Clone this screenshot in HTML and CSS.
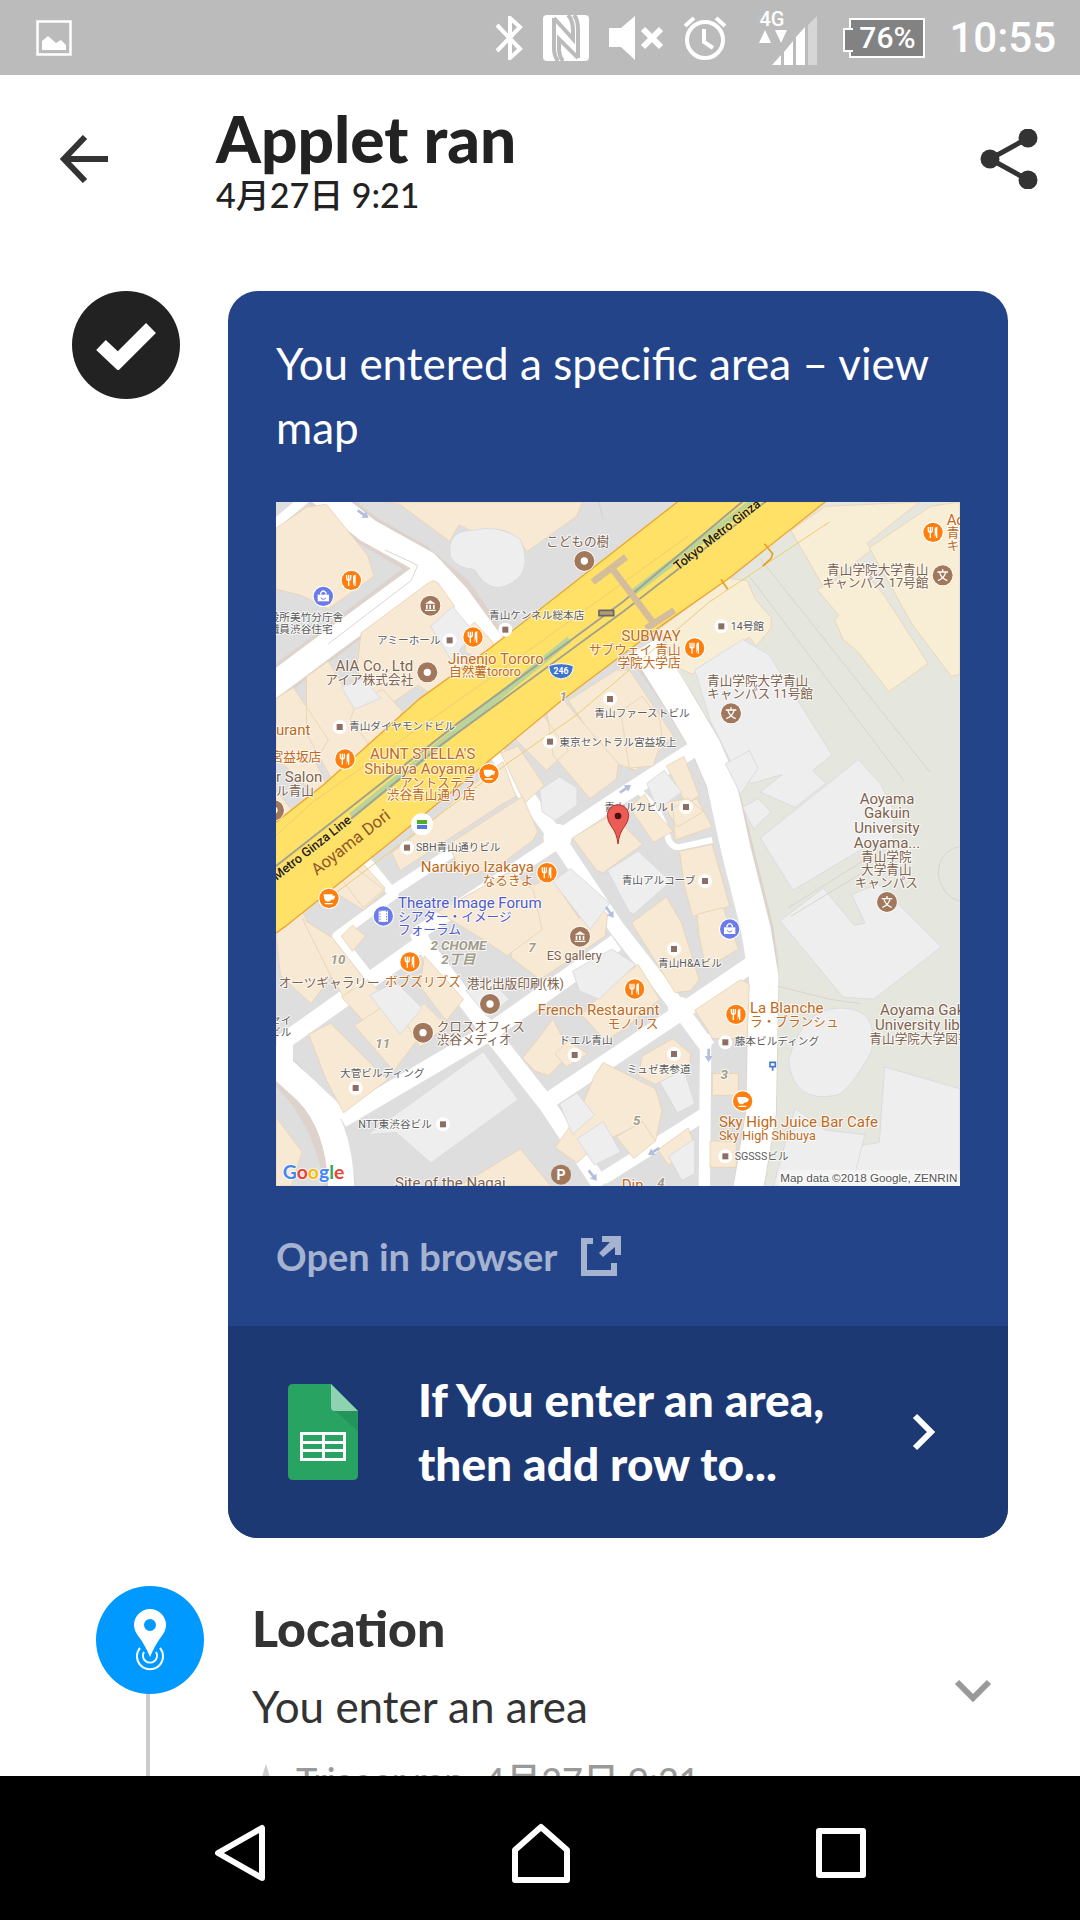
FILE: index.html
```html
<!DOCTYPE html>
<html lang="en">

<head>
  <meta charset="UTF-8">
  <meta name="viewport" content="width=device-width, initial-scale=1.0">
  <title>Applet ran</title>
  <link rel="stylesheet" href="styles.css">
</head>

<body>
  <div class="status">
    <svg class="picture" width="36" height="36" viewBox="0 0 36 36"><path d="M1.500 1.500h33v33h-33z" fill="none" stroke="#fff" stroke-width="2.500" /><path d="M6 30V21l6-5 8 7 5-3 5 5v5z" fill="#fff" /></svg>
    <div class="status-icons">
      <svg width="28" height="44" viewBox="0 0 28 44"><path d="M2 9l23 24-10 9V2l10 9L2 35" fill="none" stroke="#fff" stroke-width="4" /></svg>
      <svg width="46" height="46" viewBox="0 0 46 46"><rect width="46" height="46" rx="4" fill="#fff" /><path d="M11 3v30q0 8 4 13M11 3l19 21v-8Q30 5 25 0M35 43L16 24v9q0 8 4 13M35 43V14q0-9-4-14" fill="none" stroke="#bbb" stroke-width="4" /></svg>
      <svg width="54" height="44" viewBox="0 0 54 44"><path d="M0 12h12L26 0v44L12 31H0z" fill="#fff" /><path d="M34 13l18 18M52 13L34 31" stroke="#fff" stroke-width="6" /></svg>
      <svg width="44" height="44" viewBox="0 0 44 44"><g fill="none" stroke="#fff" stroke-width="4"><circle cx="22" cy="24" r="18" /><path d="M2 10L11 2M42 10L33 2M21 13v13l9 6" /></g></svg>
      <div class="mobile">
        <span>4G</span>
        <svg width="58" height="47" viewBox="0 0 58 47"><path d="M0 25l6-13 6 13zM16 12h12l-6 13zM13 47l9-10v10zM25 34l9-11v24h-9zM37 19l9-10v38h-9z" fill="#fff" /><path d="M49 7l9-9v49h-9z" fill="#d6d6d6" /></svg>
      </div>
      <div class="battery">76%</div>
      <time>10:55</time>
    </div>
  </div>

  <header class="header">
    <button class="icon-button" aria-label="Back"><svg width="48" height="48" viewBox="0 0 48 48"><path d="M25 2L4 24l21 22M4 24h44" fill="none" stroke="#333" stroke-width="6" /></svg></button>
    <div class="heading">
      <h1>Applet ran</h1>
      <p>4月27日 9:21</p>
    </div>
    <button class="icon-button" aria-label="Share"><svg width="58" height="60" viewBox="0 0 58 60"><path d="M48 9L10 30l38 21" fill="none" stroke="#333" stroke-width="5" /><g fill="#333"><circle cx="48" cy="9" r="9.500" /><circle cx="10" cy="30" r="9.500" /><circle cx="48" cy="51" r="9.500" /></g></svg></button>
  </header>

  <main>
    <section class="run">
      <div class="circle done"><svg width="62" height="50" viewBox="0 0 62 50"><path d="M6 25l17 16L56 8" fill="none" stroke="#fff" stroke-width="14" /></svg></div>
      <article class="card">
        <div class="card-body">
          <p class="message">You entered a specific area – view map</p>

          <svg class="map" viewBox="0 0 2052 2052" role="img" aria-label="Map of the area">
            <defs>
              <g id="food"><circle r="32" fill="#fff" /><circle r="29" fill="#ff7f0e" /><path d="M-14-16v10q0 6 6 6v17M-8-16V0M-2-16v10q0 6-6 6" fill="none" stroke="#fff" stroke-width="4" /><path d="M5 17v-26q0-8 8-8v34h-4v-13z" fill="#fff" /></g>
              <g id="cup"><circle r="32" fill="#fff" /><circle r="29" fill="#ff7f0e" /><path d="M-16-12h27v4h7q0 14-11 12-4 6-11 6-12 0-12-22zM-13 14h24v4h-24z" fill="#fff" /></g>
              <g id="ring"><circle r="32" fill="#fff" /><circle r="30" fill="#a1785c" /><circle r="11" fill="#fff" /></g>
              <g id="spot"><circle r="21" fill="#fff" /><path d="M-9-9H9V9H-9z" fill="#8d6e63" /></g>
              <g id="museum"><circle r="32" fill="#fff" /><circle r="30" fill="#a1785c" /><path d="M-16-6L0-16 16-6zM-16 12h32v4h-32zM-13-3h5v13h-5zM-3-3h5v13h-5zM8-3h5v13H8z" fill="#fff" /></g>
              <g id="shop"><circle r="32" fill="#fff" /><circle r="29" fill="#6b7be8" /><path d="M-17-5h34v20h-34z" fill="#fff" /><path d="M-8-5v-5q8-12 16 0v5" fill="none" stroke="#fff" stroke-width="4" /><path d="M-8 4q8 10 16 0" fill="none" stroke="#6b7be8" stroke-width="3" /></g>
              <g id="school"><circle r="32" fill="#fff" /><circle r="30" fill="#a1785c" /><path d="M0-18v7M-16-10h32M-9-8q5 17 23 24M9-8Q4 9-14 16" fill="none" stroke="#fff" stroke-width="4" /></g>
              <path id="arrow" d="M0-4h22v-8l18 12-18 12V4H0z" fill="#b3bfdc" />
            </defs>

            <g transform="scale(1.3087)">
              <!-- ground -->
              <path class="ground" d="M0 0h1568v1568H0z" />
              <path class="campus" d="M1180 60L1260 0h308v1568h-460l30-200 15-330-40-150-60-250-50-120-130-190z" />

              <!-- side streets -->
              <path class="street-edge" d="M90-30L210 65 330 135 415 205 500 330M340 160L120 325-20 430M850 350L920 450 985 560 1020 640 1060 800 1105 980 1118 1100 1112 1400 1080 1590M-10 1280Q130 1400 150 1590" />
              <g class="street">
                <path d="M90-30L210 65 345 140 415 215 510 345M345 160L120 325-20 430" stroke-width="56" />
                <path d="M-20 65L70-10" stroke-width="22" />
                <path d="M845 330L920 450 985 560 1020 640 1055 800 1100 980 1118 1090 1112 1400 1080 1590" stroke-width="68" />
                <path d="M495 560L600 710 640 765 780 975 920 1155 990 1250" stroke-width="36" />
                <path d="M985 1220L982 1568" stroke-width="26" />
                <path d="M925 1165L960 1200 990 1245" stroke-width="24" />
                <path d="M640 775L790 675 960 565" stroke-width="36" />
                <path d="M825 655L870 700Q890 730 900 775 910 795 930 790L1000 775" stroke-width="14" />
                <path d="M575 690L270 890" stroke-width="24" />
                <path d="M205 820L270 900 140 995 215 1090" stroke-width="22" />
                <path d="M650 775L440 915 330 985 330 1030" stroke-width="32" />
                <path d="M325 985L335 1010 490 1215 620 1380 745 1568" stroke-width="38" />
                <path d="M330 1015L20 1235 20 1290 150 1410" stroke-width="38" />
                <path d="M-30 1260L70 1350Q150 1430 150 1590" stroke-width="60" />
                <path d="M150 1415L490 1215 780 1010" stroke-width="40" />
                <path d="M620 1375L920 1175 1090 1060" stroke-width="38" />
                <path d="M750 1550L980 1405" stroke-width="30" />
                <path d="M15 590L90 650" stroke-width="16" />
                <circle cx="645" cy="770" r="22" stroke-width="20" />
                <circle cx="925" cy="1160" r="14" stroke-width="24" />
              </g>

              <!-- buildings -->
              <g class="house">
                <path d="M0 60L70 12 115 5 210 122 225 170 120 245 60 215 0 200z" />
                <path d="M250 0h452l-12 32-115 82q-30-60-95-50-25 12-60-12l-22 38-115-85z" />
                <path d="M195 300L350 185q15-10 25 5l35 50-55 45 100 115-70 60-60-40-80 55-60-90z" />
                <path d="M430 300l25-25 45 50-20 40-45-20z" />
                <path d="M70 400l50-35 65 110 40 50-35 70-60 45-60-110zM0 450l40-25 80 120-30 50 40 80-20 15-110-105z" />
                <path d="M185 455l60-25 45 50-30 50-35 40-55-70zM0 660l40 50-40 30z" />
                <path d="M670 455l110-70h30l100 150-25 30-60 50-60-20z" />
                <path d="M620 475l40-20 125 145-5 35-60 45-85-100zM545 540l65-55 60 85-50 45zM515 575l40-15 60 90-45 40z" />
                <path d="M790 480l50-35 40 55 5 40-20 65-55 5z" />
                <path d="M430 665l90-70 30 80-35 20-230 150-20-40 100-80z" />
                <path d="M395 785l170-110 35 80-10 20-80 60-80 25z" />
                <path d="M680 770l90-55 70 70-90 65-15-5zM810 700l35-30 20 35 45 50-45 25z" />
                <path d="M895 605l40-22 35 90-30 20zM910 700l55-20 35 65-85 30zM885 690l60-10 35 30-60 35z" />
                <path d="M925 800l75-15 40 140-20 10-65 15-20-75z" />
                <path d="M815 965l80-60 35 60 40 130-20 25-35 5z" />
                <path d="M965 945l60-15 35 95-75 45-15-75z" />
                <path d="M960 1165l105-70 20 10-5 125h-80l-10-20z" />
                <path d="M1000 1310h60v50h-60zM995 1465h60v60h-60z" />
                <path d="M110 880l60-50 80 60-50 45zM150 865l50-35 50 55-50 45zM0 990l60-50 80 130-60 80-70-65z" />
                <path d="M60 955l70 45 70 90-45 45-30-50zM150 995l25-25 30 25-30 35z" />
                <path d="M540 900l90-40 65 95 30-35 35 25-5 50-90 60-60 40-65-50-5-50z" />
                <path d="M370 940l170-95 50 45 20 90-80 60-60-40z" />
                <path d="M340 1040l90 100-40 50-60-80zM150 1135l60-40 120 120-50 60z" />
                <path d="M75 1220l50-25 130 130-100 75-40-75zM180 1200l90-60 60 85-60 80z" />
                <path d="M290 1180l50-30 50 50-60 50zM565 1275l40-50 30-40 20 40 30 30-60 60-30-10z" />
                <path d="M640 1265l30-30 45 30-50 30zM700 1175l60-60 70-55 50 80-85 70-40 25z" />
                <path d="M730 1315l20-30 120 60 15 50-15 70-40-35-90 40-50 45-50-35 55-80z" />
                <path d="M840 1270l70-40 40 35v30l-80 40-40-20zM780 1455l60-35 30 45-50 40zM875 1485l70-50 15 40-60 45z" />
                <path d="M0 1410l60 80-25 78H0zM420 1568l140-85 70 85z" />
                <path class="school-house" d="M880 290L1035 175l45 5 20 45 35 40v25l-35 40-15-20-130 85-35-15z" />
                <path class="school-house" d="M1180 65L1260 10l215-10-120 95 10 15-110 85z" />
                <path class="school-house" d="M1240 200l100-50 55 65 100 155-90 65-70-90-35-30-20-45 10-10z" />
                <path class="school-house" d="M1360 105L1500 10l68-10v395l-20 5-90-120z" />
              </g>
              <g class="block">
                <path d="M400 125q-10-60 50-60 60-15 110 20 25 60-5 90-60 50-100-20-45-5-55-30z" />
                <path d="M355 285l50-45 50 60-35 40 20 30-40-10zM150 425l50-20 40 45-60 25z" />
                <path d="M605 660l45-30 40 25v40l-50 35-30-20zM850 645l40-30 40 50-55 40zM760 845l70-45 75 70-85 75-10-5z" />
                <path d="M960 385l110-70 60 35 145 230-45 35 30 30-70 55-80-35 50-40-70 20-45-45-50-100z" />
                <path d="M1030 600l55-30 20 40-40 60zM1070 700l35-20 30 30-40 40z" />
                <path d="M1110 770L1335 590l50 55 30 60v85l-45-10-185 110z" />
                <path d="M1155 960l100-75 70 85 25-5-30-65 60-25 145 145-155 120-70-5z" />
                <path d="M1175 1280q30-120 120-120 90 0 70 100-50 90-80 100-100 20-110-80z" />
                <path d="M1395 1295l173 50v223h-280l35-90 60-10z" />
                <path d="M1190 1390l70 50 90 10-30 118h-180z" />
                <path d="M635 870l40-30 90 80-45 60zM680 1075l90-50 55 35-85 80-45-20zM435 1120l60-20 40 40-50 40z" />
                <path d="M215 1130l60-30 60 60-50 60zM210 1450L475 1260l80 110-200 145-80-70z" />
                <path d="M650 1380l40-25 40 50-50 45zM880 1330l55-30 25 80-40 20zM690 1460l60-40 40 70-60 30zM900 1500l60-40v80l-30 15z" />
              </g>
              <g class="paths">
                <path d="M1085 100Q1120 60 1130 95M1110 130L1500 620M1085 170L1440 640M1175 930L1350 820M1180 950L1360 840M1150 1110L1270 1140 1340 1150" />
                <path d="M1568 790q-50 10-50 65 10 50 50 60M740 0l10 40M230 40L350 105M120 325L310 180 325 145 250 110" />
              </g>
            </g>

            <!-- highway and metro line -->
            <path class="highway" d="M-10 968L142 849 432 589 642 439 1032 134 1217-10H1660L1352 234 1157 370 852 599 672 749 352 1014 27 1274-10 1300z" />
            <path class="lane" d="M-10 1010L110 900 640 530 1240 100M130 1210L700 780 900 640 1300 300 1660 60" />
            <path class="green" d="M225 942L880 412M1070 272L1430 0" />
            <path class="rail" d="M-10 1100L540 668 1040 300 1410-10M225 950L500 725 1040 330 1480-10" />
            <path class="bridge" d="M950 240l100-75M1005 195l125 165M1110 380l85-55" />
            <path class="bridge-edge" d="M1465 125l25 30-5 15-25 22M1335 232l20 30" />

            <use href="#arrow" transform="translate(245 25) rotate(35)" />
            <use href="#arrow" transform="translate(1032 872) rotate(-35)" />
            <use href="#arrow" transform="translate(990 1215) rotate(55)" />
            <use href="#arrow" transform="translate(1298 1640) rotate(90)" />
            <use href="#arrow" transform="translate(1150 1938) rotate(148)" />
            <use href="#arrow" transform="translate(938 2005) rotate(52)" />

            <g transform="translate(-18 -21)">
              <use href="#ring" x="943" y="198" />
              <use href="#food" x="244" y="256" />
              <use href="#shop" x="160" y="304" />
              <use href="#museum" x="481" y="332" />
              <use href="#spot" x="706" y="404" />
              <use href="#spot" x="539" y="436" />
              <use href="#food" x="609" y="426" />
              <use href="#ring" x="472" y="532" />
              <use href="#spot" x="209" y="696" />
              <use href="#spot" x="1020" y="612" />
              <use href="#spot" x="840" y="740" />
              <use href="#food" x="225" y="792" />
              <use href="#cup" x="657" y="836" />
              <use href="#ring" x="12" y="946" />
              <circle cx="456" cy="988" r="33" fill="#fff" /><path d="M441 975h30v12h-30z" fill="#4caf28" /><path d="M441 990h30v12h-30z" fill="#5577dd" />
              <path d="M836 512q37-12 74 0 0 36-37 40-36-4-37-40z" fill="#3f74cf" stroke="#fff" stroke-width="3" />
              <path d="M987 346h44v16h-44z" fill="#b39b72" stroke="#666" stroke-width="5" stroke-linejoin="round" />
              <g class="brown"><text class="l" x="828" y="153">こどもの樹</text><text class="xl end" x="430" y="528">AIA Co., Ltd</text><text class="l end" x="430" y="567">アイア株式会社</text><text class="xl" x="18" y="861">r Salon</text><text class="l" x="18" y="899">ル青山</text></g>
              <g class="grey"><text class="m" x="-4" y="379">役所美竹分庁舎</text><text class="m" x="-4" y="415">職員渋谷住宅</text><text class="m" x="657" y="373">青山ケンネル総本店</text><text class="m end" x="512" y="446">アミーホール</text><text class="m" x="237" y="706">青山ダイヤモンドビル</text><text class="m" x="868" y="752">東京セントラル宮益坂上</text><text class="m" x="973" y="667">青山ファーストビル</text></g>
              <g class="orange"><text class="xl" x="534" y="506">Jinenjo Tororo</text><text class="l" x="537" y="544">自然薯tororo</text><text class="xl" x="18" y="720">urant</text><text class="l" x="2" y="798">宮益坂店</text><text class="xl end" x="616" y="792">AUNT STELLA'S</text><text class="xl end" x="616" y="837">Shibuya Aoyama</text><text class="l end" x="616" y="875">アントステラ</text><text class="l end" x="616" y="913">渋谷青山通り店</text></g>
              <text class="route" x="873" y="537">246</text>
              <text class="area" x="880" y="617">1</text>
            </g>

            <g transform="translate(1002 -21)">
              <use href="#food" x="969" y="112" />
              <use href="#school" x="998" y="241" />
              <use href="#spot" x="334" y="394" />
              <use href="#food" x="254" y="459" />
              <use href="#school" x="363" y="655" />
              <use href="#spot" x="228" y="936" />
              <g class="orange"><text class="xl" x="1010" y="90">Aoyama</text><text class="l" x="1010" y="126">青山</text><text class="l" x="1010" y="164">キャ</text><text class="xl end" x="212" y="438">SUBWAY</text><text class="l end" x="212" y="476">サブウェイ 青山</text><text class="l end" x="212" y="515">学院大学店</text></g>
              <g class="brown"><text class="l end" x="955" y="236">青山学院大学青山</text><text class="l end" x="955" y="275">キャンパス 17号館</text><text class="l" x="291" y="570">青山学院大学青山</text><text class="l" x="291" y="608">キャンパス 11号館</text>
                <text class="xl mid" x="831" y="926">Aoyama</text><text class="xl mid" x="831" y="970">Gakuin</text><text class="xl mid" x="831" y="1015">University</text><text class="xl mid" x="831" y="1060">Aoyama...</text><text class="l mid" x="829" y="1099">青山学院</text><text class="l mid" x="829" y="1138">大学青山</text><text class="l mid" x="829" y="1176">キャンパス</text></g>
              <g class="grey"><text class="m" x="362" y="405">14号館</text><text class="m end" x="190" y="947">青山ルカビル I</text></g>
            </g>

            <g transform="translate(-18 1014)">
              <use href="#spot" x="411" y="23" />
              <use href="#food" x="831" y="98" />
              <use href="#cup" x="177" y="175" />
              <circle cx="340" cy="228" r="32" fill="#fff" /><circle cx="340" cy="228" r="29" fill="#6b7be8" /><path d="M326 212h28v34h-28z" fill="#fff" /><path d="M330 212v34M350 212v34" stroke="#6b7be8" stroke-width="3" stroke-dasharray="4 4" />
              <use href="#museum" x="930" y="290" />
              <use href="#food" x="420" y="366" />
              <use href="#ring" x="660" y="492" />
              <use href="#ring" x="459" y="578" />
              <use href="#spot" x="914" y="645" />
              <use href="#spot" x="257" y="744" />
              <use href="#spot" x="519" y="853" />
              <circle cx="873" cy="1004" r="30" fill="#a1785c" />
              <text class="parking" x="873" y="1019">P</text>
              <g class="grey"><text class="m" x="438" y="32">SBH青山通りビル</text><text class="m" x="0" y="553">セイ</text><text class="m" x="0" y="587">ビル</text><text class="m" x="868" y="613">ドエル青山</text><text class="m" x="210" y="712">大菅ビルディング</text><text class="m" x="265" y="864">NTT東渋谷ビル</text></g>
              <g class="orange"><text class="xl end" x="792" y="96">Narukiyo Izakaya</text><text class="l end" x="790" y="134">なるきよ</text><text class="l" x="345" y="438">ボブズリブズ</text><text class="xl end" x="1168" y="525">French Restaurant</text><text class="l end" x="1165" y="563">モノリス</text></g>
              <g class="blue"><text class="xl" x="384" y="205">Theatre Image Forum</text><text class="l" x="384" y="243">シアター・イメージ</text><text class="l" x="384" y="281">フォーラム</text></g>
              <g class="brown"><text class="l" x="830" y="361">ES gallery</text><text class="l" x="26" y="441">オーツギャラリー</text><text class="l" x="590" y="445">港北出版印刷(株)</text><text class="l" x="500" y="573">クロスオフィス</text><text class="l" x="500" y="612">渋谷メディオ</text><text class="xl" x="375" y="1044">Site of the Nagai</text></g>
              <text class="area" x="565" y="331">2 CHOME</text>
              <text class="area" x="565" y="371">2丁目</text>
              <text class="area" x="204" y="373">10</text>
              <text class="area" x="786" y="337">7</text>
              <text class="area" x="338" y="625">11</text>
              <text class="google" x="38" y="1018"><tspan fill="#4285f4">G</tspan><tspan fill="#ea4335">o</tspan><tspan fill="#fbbc05">o</tspan><tspan fill="#4285f4">g</tspan><tspan fill="#34a853">l</tspan><tspan fill="#ea4335">e</tspan></text>
              <text class="line-name" transform="translate(20 122) rotate(-38)">Metro Ginza Line</text>
              <text class="road-name" transform="translate(140 108) rotate(-38)">Aoyama Dori</text>
            </g>

            <g transform="translate(1002 1014)">
              <use href="#spot" x="285" y="123" />
              <use href="#school" x="831" y="186" />
              <use href="#shop" x="359" y="267" />
              <use href="#spot" x="192" y="327" />
              <use href="#food" x="74" y="447" />
              <use href="#food" x="378" y="523" />
              <use href="#spot" x="346" y="607" />
              <use href="#spot" x="192" y="642" />
              <use href="#cup" x="398" y="783" />
              <use href="#spot" x="346" y="949" />
              <path d="M480 667h16v13h-16zM488 680v12" fill="#fff" stroke="#4078d0" stroke-width="5" />
              <g class="grey"><text class="m" x="35" y="132">青山アルコーブ</text><text class="m" x="144" y="382">青山H&amp;Aビル</text><text class="m" x="374" y="616">藤本ビルディング</text><text class="m" x="50" y="699">ミュゼ表参道</text><text class="m" x="374" y="959">SGSSSビル</text></g>
              <g class="orange"><text class="xl" x="420" y="519">La Blanche</text><text class="l" x="420" y="558">ラ・ブランシュ</text><text class="xl" x="327" y="862">Sky High Juice Bar Cafe</text><text class="l" x="327" y="900">Sky High Shibuya</text><text class="xl" x="35" y="1050">Din</text></g>
              <g class="brown"><text class="xl" x="810" y="526">Aoyama Gakuin</text><text class="xl" x="795" y="570">University library</text><text class="l" x="778" y="610">青山学院大学図書館</text></g>
              <text class="area" x="343" y="716">3</text>
              <text class="area" x="80" y="854">5</text>
              <text class="area" x="153" y="1040">4</text>
              <path d="M505 990h550v50H505z" fill="#f5f5f5" fill-opacity=".8" />
              <text class="copyright" x="1042" y="1025">Map data ©2018 Google, ZENRIN</text>
            </g>
            <text class="line-name" transform="translate(1206 206) rotate(-38)">Tokyo Metro Ginza Line</text>

            <path d="M1026 1026q-3-32-20-53-12-16-12-33a32 32 0 0 1 64 0q0 17-12 33-17 21-20 53z" fill="#ea5c54" stroke="#b3322c" stroke-width="3" />
            <circle cx="1026" cy="942" r="10" fill="#4b0f0c" />
          </svg>

          <a class="open" href="#">Open in browser
            <svg width="40" height="40" viewBox="0 0 40 40"><path d="M12 5H3v32h30V27" fill="none" stroke="currentColor" stroke-width="6" /><path d="M21 0h19v19h-6V11l-12 10-4-4L29 6h-8z" fill="currentColor" /></svg>
          </a>
        </div>
        <a class="applet" href="#">
          <svg width="70" height="96" viewBox="0 0 70 96"><path d="M5 0h38l27 27v64q0 5-5 5H5q-5 0-5-5V5q0-5 5-5z" fill="#29a362" /><path d="M45 25l25 22V27z" fill="#23945a" /><path d="M43 0l27 27H47q-4 0-4-4z" fill="#8fd2b1" /><path d="M12 48h46v29H12zM15 51v6h19v-6zM37 51v6h18v-6zM15 60v5h19v-5zM37 60v5h18v-5zM15 68v6h19v-6zM37 68v6h18v-6z" fill="#fff" fill-rule="evenodd" /></svg>
          <span>If You enter an area, then add row to...</span>
          <svg width="24" height="38" viewBox="0 0 24 38"><path d="M3 3l16 16L3 35" fill="none" stroke="#fff" stroke-width="6" /></svg>
        </a>
      </article>
    </section>

    <section class="step">
      <div class="rail-column">
        <div class="circle place"><svg width="32" height="62" viewBox="0 0 32 62"><path d="M16 48Q11 36 5 28 0 22 0 16a16 16 0 0 1 32 0q0 6-5 12-6 8-11 20zM16 10a6 6 0 1 0 0 12 6 6 0 0 0 0-12z" fill="#fff" fill-rule="evenodd" /><path d="M6 39a13 13 0 1 0 20 0M10 43a7 7 0 1 0 12 0" fill="none" stroke="#fff" stroke-width="2" /></svg></div>
      </div>
      <div class="step-text">
        <h2>Location</h2>
        <p>You enter an area</p>
        <p class="trigger"><svg width="20" height="32" viewBox="0 0 20 32"><path d="M10 0l10 32H0z" fill="#ccc" /></svg>Trigger ran <time>4月27日 9:21</time></p>
      </div>
      <button class="icon-button expand" aria-label="Show details"><svg width="38" height="24" viewBox="0 0 38 24"><path d="M3 3l16 16L35 3" fill="none" stroke="#999" stroke-width="6" /></svg></button>
    </section>
  </main>

  <nav class="nav">
    <button class="icon-button" aria-label="Back"><svg width="52" height="58" viewBox="0 0 52 58"><path d="M48 4v50L4 29z" fill="none" stroke="#fff" stroke-width="6" stroke-linejoin="round" /></svg></button>
    <button class="icon-button" aria-label="Home"><svg width="58" height="60" viewBox="0 0 58 60"><path d="M3 27L29 4l26 23v30H3z" fill="none" stroke="#fff" stroke-width="6" stroke-linejoin="round" /></svg></button>
    <button class="icon-button" aria-label="Recent apps"><svg width="50" height="50" viewBox="0 0 50 50"><path d="M3 3h44v44H3z" fill="none" stroke="#fff" stroke-width="6" stroke-linejoin="round" /></svg></button>
  </nav>
</body>

</html>
```
FILE: styles.css
```css
* {
  margin: 0;
  padding: 0;
  box-sizing: border-box;
}

body {
  height: 100vh;
  display: flex;
  flex-direction: column;
  overflow: hidden;
  background: #fff;
  color: #333;
  font-family: Lato, "Noto Sans CJK JP", sans-serif;
  font-size: 44px;
  line-height: 64px;
}

svg {
  display: block;
  flex-shrink: 0;
}

a {
  color: inherit;
  text-decoration: none;
}

.icon-button {
  display: flex;
  justify-content: center;
  align-items: center;
  border: none;
  background: none;
}

/* status bar */
.status {
  height: 75px;
  flex-shrink: 0;
  display: flex;
  justify-content: space-between;
  align-items: center;
  padding: 0 24px 0 36px;
  background: #bbb;
  color: #fff;
  font-family: Roboto, sans-serif;
}

.status-icons {
  display: flex;
  align-items: center;
  gap: 20px;
}

.status-icons time {
  margin-left: 4px;
  font-size: 42px;
  font-weight: 500;
}

.mobile {
  display: flex;
  flex-direction: column;
  margin-left: 12px;
  font-size: 20px;
  font-weight: 500;
  line-height: 16px;
}

.mobile svg {
  margin-top: -9px;
  overflow: visible;
}

.battery {
  position: relative;
  width: 76px;
  height: 40px;
  margin-left: 12px;
  border: 2px solid #fff;
  background: #828282;
  font-size: 30px;
  font-weight: 500;
  line-height: 36px;
  text-align: center;
}

.battery::before {
  content: "";
  position: absolute;
  left: -8px;
  top: 8px;
  width: 8px;
  height: 20px;
  border: 2px solid #fff;
  border-right: none;
  background: #828282;
}

/* title */
.header {
  flex-shrink: 0;
  display: flex;
  align-items: center;
  padding: 28px 42px 32px 60px;
}

.heading {
  flex: 1;
  margin-left: 108px;
  color: #222;
}

.heading h1 {
  font-size: 64px;
  font-weight: 900;
  line-height: 72px;
}

.heading p {
  font-size: 34px;
  font-weight: 500;
  line-height: 40px;
}

main {
  flex: 1;
  min-height: 0;
  overflow: hidden;
  padding: 44px 72px 0;
}

.circle {
  width: 108px;
  height: 108px;
  flex-shrink: 0;
  display: flex;
  justify-content: center;
  align-items: center;
  border-radius: 50%;
}

.done {
  background: #222;
}

.place {
  background: #0099ff;
}

/* card */
.run {
  display: flex;
  align-items: flex-start;
  gap: 48px;
}

.card {
  flex: 1;
  overflow: hidden;
  border-radius: 30px;
  background: #24448a;
  color: #fff;
}

.card-body {
  padding: 40px 48px 38px;
}

.message {
  margin-bottom: 43px;
}

.map {
  width: 100%;
  height: auto;
  overflow: hidden;
}

.open {
  display: flex;
  align-items: center;
  gap: 24px;
  margin-top: 38px;
  color: #a5b3d0;
  font-size: 38px;
  font-weight: 700;
}

.applet {
  display: flex;
  align-items: center;
  padding: 42px 72px 42px 60px;
  background: #1d3973;
  font-size: 46px;
  font-weight: 900;
}

.applet span {
  flex: 1;
  margin: 0 60px;
}

/* map drawing */
.ground {
  fill: #dedede;
}

.campus {
  fill: #e5e7df;
}

.house path {
  fill: #f7e9d3;
  stroke: #e8d3b5;
  stroke-width: 2;
}

.house .school-house {
  fill: #f8eed5;
}

.block path {
  fill: #eee;
  stroke: #d9d9de;
  stroke-width: 2;
}

.street,
.street-edge {
  fill: none;
  stroke: #fff;
  stroke-linejoin: round;
}

.street-edge {
  stroke: #ddd3cc;
  stroke-width: 72;
}

.paths {
  fill: none;
  stroke: #d8cfc8;
  stroke-width: 2;
}

.highway {
  fill: #ffe168;
  stroke: #eda52c;
  stroke-width: 4;
}

.lane {
  fill: none;
  stroke: #ebce72;
  stroke-width: 3;
}

.green {
  stroke: #b9d59b;
  stroke-width: 20;
}

.rail {
  fill: none;
  stroke: #a2a28e;
  stroke-width: 6;
}

.bridge {
  fill: none;
  stroke: #d4bd9b;
  stroke-width: 20;
}

.bridge-edge {
  fill: none;
  stroke: #e5a21d;
  stroke-width: 5;
}

.map text {
  font-family: Roboto, "Noto Sans CJK JP", sans-serif;
  paint-order: stroke;
  stroke: #fff;
  stroke-opacity: .8;
  stroke-width: 6;
  stroke-linejoin: round;
}

.map .m {
  font-size: 32px;
}

.map .l {
  font-size: 38px;
}

.map .xl {
  font-size: 45px;
}

.map .end {
  text-anchor: end;
}

.map .mid {
  text-anchor: middle;
}

.brown {
  fill: #80624c;
}

.grey {
  fill: #5c5c5c;
}

.orange {
  fill: #bf6a20;
}

.blue {
  fill: #4d5acb;
}

.map .area {
  fill: #a39b89;
  font-size: 40px;
  font-style: italic;
  font-weight: 700;
  text-anchor: middle;
}

.map .route,
.map .parking {
  fill: #fff;
  stroke: none;
  font-size: 26px;
  font-weight: 700;
  text-anchor: middle;
}

.map .parking {
  font-size: 42px;
}

.map .line-name,
.map .road-name {
  fill: #222;
  stroke: #ffe168;
  font-size: 38px;
  font-weight: 500;
}

.map .road-name {
  fill: #8f5727;
  font-size: 50px;
  font-weight: 400;
}

.map .google {
  font-family: Lato, sans-serif;
  font-size: 58px;
  font-weight: 700;
}

.map .copyright {
  fill: #555;
  font-family: "Liberation Sans", sans-serif;
  font-size: 35px;
  text-anchor: end;
}

/* steps */
.step {
  display: flex;
  align-items: flex-start;
  padding: 48px 16px 0 24px;
}

.rail-column {
  width: 108px;
  height: 300px;
  background: linear-gradient(#ccc, #ccc) 50px 0 / 4px 100% no-repeat;
}

.step-text {
  flex: 1;
  margin-left: 48px;
}

.step-text h2 {
  margin: 10px 0 14px;
  font-size: 50px;
  font-weight: 900;
}

.trigger {
  display: flex;
  align-items: center;
  gap: 20px;
  margin-top: 10px;
  padding-left: 4px;
  color: #999;
  font-size: 36px;
  font-weight: 500;
}

.expand {
  margin-top: 93px;
}

/* android buttons */
.nav {
  height: 144px;
  flex-shrink: 0;
  display: flex;
  justify-content: space-between;
  align-items: center;
  padding: 10px 214px 0;
  background: #000;
}
```
